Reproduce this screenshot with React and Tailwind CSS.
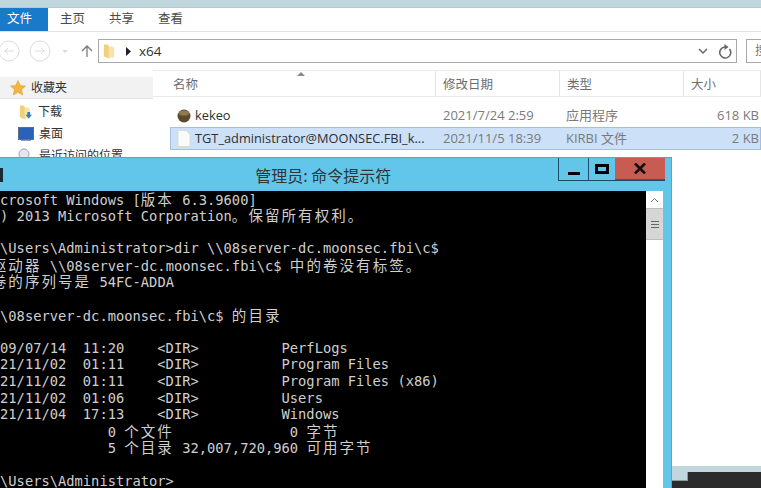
const ui = { fontFamily: '"Open Sans","Noto Sans CJK SC",sans-serif' };

function Z({ children }) {
  return <span className="text-[14.5px] tracking-[2.06px]" style={{ fontFamily: '"Noto Sans CJK SC",sans-serif' }}>{children}</span>;
}

function L({ children }) {
  return <div className="h-[16.6px] leading-[16.6px] whitespace-pre overflow-visible">{children || " "}</div>;
}

function Col({ w, children, pl = "pl-[7px]" }) {
  return <div className={`${w} h-full flex items-center pt-[3px] border-r border-[#e5e5e5] ${pl} text-[12.5px] text-[#6d6d6d]`}>{children}</div>;
}

function Star() {
  return (
    <svg width="16" height="16" viewBox="0 0 16 16">
      <path d="M8 .5l2.2 5 5.3.5-4 3.5 1.2 5.5L8 12.2 3.3 15l1.2-5.5-4-3.5 5.3-.5z" fill="#f5b53c" stroke="#d9952a" strokeWidth=".5" />
    </svg>
  );
}

function Folder({ arrow }) {
  return (
    <svg width="13" height="17" viewBox="0 0 14 17">
      <path d="M1 1h4l2 3v12l-6-2z" fill="#f0d078" />
      <path d="M6 3h4l2 2v10H6z" fill="#f7e3a6" />
      {arrow && <path d="M9 8h3v3h2l-3.5 4L7 11h2z" fill="#2b7fd0" />}
    </svg>
  );
}

function Row({ selected, icon, name, date, type, size }) {
  return (
    <div className={`h-[23px] flex items-center text-[13px] border ${selected ? "bg-[#cce0f8] border-[#a5bfdc]" : "border-transparent"}`}>
      <div className="w-[272px] flex items-center gap-[4px] pl-[5px] text-[#2f2f2f]">
        <span className="w-[15px] h-[18px] flex items-center justify-center">{icon}</span>
        <span className="whitespace-nowrap text-[12.8px]">{name}</span>
      </div>
      <div className="w-[123px] text-[#7a7a7a]">{date}</div>
      <div className="w-[120px] text-[#7a7a7a]">{type}</div>
      <div className="flex-1 text-right pr-[1px] text-[#7a7a7a]">{size}</div>
    </div>
  );
}

function Explorer() {
  return (
    <div className="h-full flex flex-col bg-white" style={ui}>
      <div className="h-[8px] bg-[#c0d6dd] border-b border-[#b4c9d0]" />
      <div className="h-[24px] flex border-b border-[#e2e2e2] text-[12.5px] text-[#4a4a4a]">
        <div className="w-[48px] bg-[#1979ca] text-white flex items-center pl-[7px]">文件</div>
        <div className="flex items-center gap-[24px] pl-[12px]">
          <span>主页</span><span>共享</span><span>查看</span>
        </div>
      </div>
      <div className="h-[38px] flex items-center">
        <div className="w-[98px] flex items-center">
          <svg width="98" height="24" viewBox="0 0 98 24">
            <g fill="none" stroke="#dcdcdc">
              <circle cx="9" cy="12" r="10" /><circle cx="40" cy="12" r="10" />
              <path d="M14 12H4m4-3-3 3 3 3M35 12h10m-4-3 3 3-3 3" />
            </g>
            <path d="M62 11h6l-3 3z" fill="#dcdcdc" />
            <path d="M87 18V7m-5 5 5-5 5 5" fill="none" stroke="#7a7a7a" strokeWidth="1.3" />
          </svg>
        </div>
        <div className="w-[639px] h-[24px] border border-[#a8a8a8] flex items-center pl-[4px] pr-[3px] text-[13px] text-[#333]">
          <Folder />
          <svg className="ml-[9px]" width="6" height="9" viewBox="0 0 6 9"><path d="M1 0l5 4.5L1 9z" fill="#222" /></svg>
          <span className="ml-[8px] text-[13.5px]">x64</span>
          <div className="flex-1" />
          <svg width="10" height="7" viewBox="0 0 10 7"><path d="M1 1l4 4 4-4" fill="none" stroke="#666" strokeWidth="1.5" /></svg>
          <svg className="ml-[10px]" width="14" height="15" viewBox="0 0 14 15"><path d="M11.5 5A5.5 5.5 0 1 1 7 3" fill="none" stroke="#666" strokeWidth="1.6" /><path d="M6.5 0v6l4-3z" fill="#666" /></svg>
          <div className="w-[1px]" />
        </div>
        <div className="ml-[9px] flex-1 h-[24px] border border-r-0 border-[#a8a8a8] pl-[8px] text-[12px] leading-[22px] text-[#777] overflow-hidden whitespace-nowrap">搜索</div>
      </div>
      <div className="flex-1 flex min-h-0">
        <div className="w-[153px] pt-[7px] text-[12px] text-[#333]">
          <div className="h-[22px] bg-[#f2f2f2] border-b border-[#e6e6e6] flex items-center gap-[5px] pl-[10px] pt-[1px]"><Star /><span>收藏夹</span></div>
          <div className="h-[22px] mt-[2px] flex items-center gap-[6px] pl-[19px] "><Folder arrow /><span>下载</span></div>
          <div className="h-[22px] flex items-center gap-[5px] pl-[18px]">
            <svg width="16" height="14" viewBox="0 0 16 14"><rect x=".5" y=".5" width="15" height="12" fill="#2a62b8" stroke="#5c6f85" /><path d="M3 13.5h10" stroke="#8da0b5" /></svg>
            <span>桌面</span>
          </div>
          <div className="h-[22px] flex items-center gap-[5px] pl-[18px]">
            <svg width="16" height="16" viewBox="0 0 16 16"><circle cx="6" cy="6" r="5" fill="#e2e8ee" stroke="#9aa8b5" /><rect x="6" y="9" width="9" height="6" fill="#d4dbe2" /></svg>
            <span>最近访问的位置</span>
          </div>
        </div>
        <div className="flex-1 flex flex-col">
          <div className="relative h-[27px] flex border-t border-b border-[#ebebeb]">
            <Col w="w-[283px]" pl="pl-[20px]">名称</Col>
            <Col w="w-[124px]">修改日期</Col>
            <Col w="w-[124px]">类型</Col>
            <Col w="flex-1">大小</Col>
            <svg className="absolute left-[144px] top-0" width="8" height="5" viewBox="0 0 8 5"><path d="M0 5l4-4 4 4z" fill="#7f8a94" /></svg>
          </div>
          <div className="pl-[17px] pt-[7px]">
            <Row
              icon={<svg width="14" height="14" viewBox="0 0 14 14"><circle cx="7" cy="7" r="6.5" fill="#5d4a2c" /><ellipse cx="7" cy="4" rx="5" ry="2.6" fill="#8f7a55" /></svg>}
              name="kekeo" date="2021/7/24 2:59" type="应用程序" size="618 KB"
            />
            <Row
              selected
              icon={<svg width="14" height="17" viewBox="0 0 14 17"><path d="M1 .5h8l4 4v12H1z" fill="#fafafa" stroke="#dcdcdc" /></svg>}
              name="TGT_administrator@MOONSEC.FBI_k..." date="2021/11/5 18:39" type="KIRBI 文件" size="2 KB"
            />
          </div>
        </div>
      </div>
      <div className="h-[6px] bg-[#c2d6dd]" />
      <div className="h-[16px] bg-[#2b2b2b] pl-[672px]">
        <div className="w-[16px] h-[9px] bg-[#c2d6dd] border-r border-b border-[#8a9aa0]" />
      </div>
    </div>
  );
}

function CaptionButtons() {
  return (
    <div className="flex h-[23px] border-b border-[#1f4a66] justify-self-end">
      <div className="w-[30px] border-l border-[#1f4a66] flex justify-center items-end pb-[5px]"><div className="w-[12px] h-[3px] bg-black" /></div>
      <div className="w-[27px] border-l border-[#1f4a66] flex justify-center items-center"><div className="w-[14px] h-[10px] border-[3px] border-black" /></div>
      <div className="w-[50px] bg-[#c75c52] border-b border-[#8a3a3a] flex justify-center items-center">
        <svg width="12" height="11" viewBox="0 0 12 11"><path d="M1 .5l10 10M11 .5l-10 10" stroke="#111" strokeWidth="2.6" /></svg>
      </div>
    </div>
  );
}

function Console() {
  return (
    <div className="absolute left-[-25.5px] top-[157px] w-[697.5px] h-[340px] bg-[#62c6ea] border-t border-r border-[#7d97a3] flex flex-col">
      <div className="h-[33px] grid grid-cols-[1fr_auto_1fr] items-start pr-[6px]">
        <div className="mt-[10px] ml-[6px] w-[22px] h-[14px] bg-[#1a2a33]" />
        <div className="pt-[7px] pl-[7px] text-[16px] leading-[20px] text-[#333]" style={{ fontFamily: '"Noto Sans CJK SC",sans-serif' }}>管理员: 命令提示符</div>
        <CaptionButtons />
      </div>
      <div className="flex-1 flex ml-[9px] mr-[8px] min-h-0">
        <div className="flex-1 bg-black text-[#cfcfcf] text-[13.75px] overflow-hidden -mt-[0.5px]" style={{ fontFamily: '"DejaVu Sans Mono",monospace' }}>
          <L>Microsoft Windows [<Z>版本</Z> 6.3.9600]</L>
          <L>(c) 2013 Microsoft Corporation<Z>。保留所有权利。</Z></L>
          <L />
          <L>C:\Users\Administrator&gt;dir \\08server-dc.moonsec.fbi\c$</L>
          <L> <Z>驱动器</Z> \\08server-dc.moonsec.fbi\c$ <Z>中的卷没有标签。</Z></L>
          <L> <Z>卷的序列号是</Z> 54FC-ADDA</L>
          <L />
          <L> \\08server-dc.moonsec.fbi\c$ <Z>的目录</Z></L>
          <L />
          <L>2009/07/14  11:20    &lt;DIR&gt;          PerfLogs</L>
          <L>2021/11/02  01:11    &lt;DIR&gt;          Program Files</L>
          <L>2021/11/02  01:11    &lt;DIR&gt;          Program Files (x86)</L>
          <L>2021/11/02  01:06    &lt;DIR&gt;          Users</L>
          <L>2021/11/04  17:13    &lt;DIR&gt;          Windows</L>
          <L>               0 <Z>个文件</Z>              0 <Z>字节</Z></L>
          <L>               5 <Z>个目录</Z> 32,007,720,960 <Z>可用字节</Z></L>
          <L />
          <L>C:\Users\Administrator&gt;</L>
        </div>
        <div className="w-[17px] bg-white flex flex-col">
          <div className="h-[17px] flex items-center justify-center">
            <svg width="9" height="6" viewBox="0 0 9 6"><path d="M1 5l3.5-3.5L8 5" fill="none" stroke="#777" strokeWidth="1" /></svg>
          </div>
          <div className="h-[32px] bg-[#d6d6d6] border-t border-b border-[#bdbdbd] flex flex-col items-center justify-center gap-[2px]">
            <div className="w-[8px] h-[1px] bg-[#666]" />
            <div className="w-[8px] h-[1px] bg-[#666]" />
            <div className="w-[8px] h-[1px] bg-[#666]" />
          </div>
        </div>
      </div>
    </div>
  );
}

export default function App() {
  return (
    <div className="relative w-[761px] h-[488px] overflow-hidden bg-white">
      <Explorer />
      <Console />
    </div>
  );
}
